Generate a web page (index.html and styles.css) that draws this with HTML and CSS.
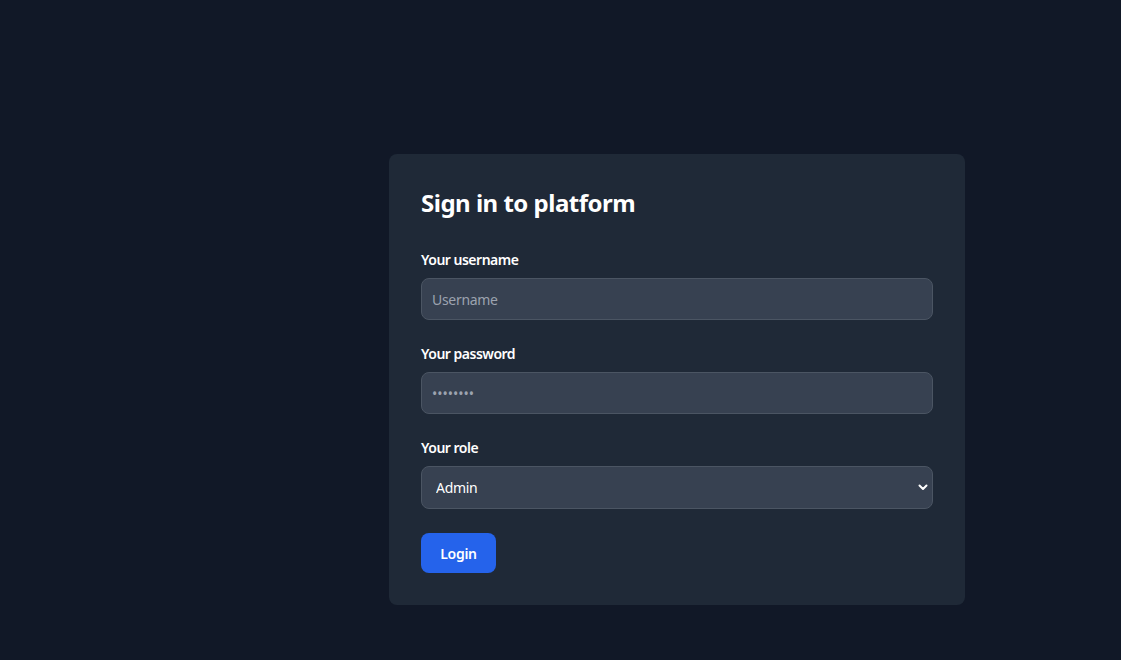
FILE: index.html
```html
<!DOCTYPE html>
<html lang="en">
<head>
<meta charset="utf-8">
<title>Sign in</title>
<link rel="stylesheet" href="styles.css">
</head>
<body>
<main class="page">
  <section class="card">
    <h1 class="title">Sign in to platform</h1>
    <form class="form">
      <div class="field">
        <label class="label" for="username">Your username</label>
        <input class="input" id="username" type="text" placeholder="Username">
      </div>
      <div class="field">
        <label class="label" for="password">Your password</label>
        <input class="input" id="password" type="password" placeholder="••••••••">
      </div>
      <div class="field">
        <label class="label" for="role">Your role</label>
        <div class="select-wrap">
          <select class="input select" id="role">
            <option>Admin</option>
            <option>User</option>
          </select>
          <svg class="chevron" width="10" height="7" viewBox="0 0 10 7" aria-hidden="true"><path d="M1.5 1.5 L5 5 L8.5 1.5" fill="none" stroke="#ffffff" stroke-width="2" stroke-linecap="round" stroke-linejoin="round"/></svg>
        </div>
      </div>
      <div>
        <button class="button" type="button">Login</button>
      </div>
    </form>
  </section>
</main>
</body>
</html>
```

FILE: styles.css
```css
* { box-sizing: border-box; }
html, body { margin: 0; padding: 0; }
body {
  background: #111827;
  color: #ffffff;
  font-family: "Noto Sans", "Open Sans", "Liberation Sans", sans-serif;
  min-height: 660px;
}
.page {
  display: flex;
  padding: 154px 0 0 389px;
}
.card {
  width: 576px;
  background: #1f2937;
  border-radius: 8px;
  padding: 32px;
}
.title {
  margin: 0 0 32px;
  font-size: 24px;
  line-height: 34px;
  font-weight: 700;
  letter-spacing: -0.5px;
  color: #ffffff;
}
.form {
  display: flex;
  flex-direction: column;
  gap: 24px;
  margin-top: -2px;
}
.field { display: flex; flex-direction: column; }
.label {
  font-size: 14px;
  line-height: 20px;
  font-weight: 600;
  letter-spacing: -0.5px;
  margin-bottom: 8px;
  color: #ffffff;
}
.input {
  width: 512px;
  height: 42px;
  background: #374151;
  border: 1px solid #4b5563;
  border-radius: 8px;
  color: #ffffff;
  font-family: inherit;
  font-size: 14px;
  letter-spacing: -0.3px;
  padding: 0 10px;
  outline: none;
}
.input::placeholder { color: #9ca3af; }
#password::placeholder { letter-spacing: 0; }
.select-wrap { position: relative; }
.select {
  appearance: none;
  -webkit-appearance: none;
  height: 43px;
  padding-left: 14px;
}
.chevron {
  position: absolute;
  right: 5px;
  top: 18px;
  pointer-events: none;
}
.button {
  background: #2563eb;
  color: #ffffff;
  border: none;
  border-radius: 8px;
  height: 40px;
  width: 75px;
  font-family: inherit;
  font-size: 14px;
  font-weight: 600;
  letter-spacing: -0.3px;
  padding: 0;
}
```
